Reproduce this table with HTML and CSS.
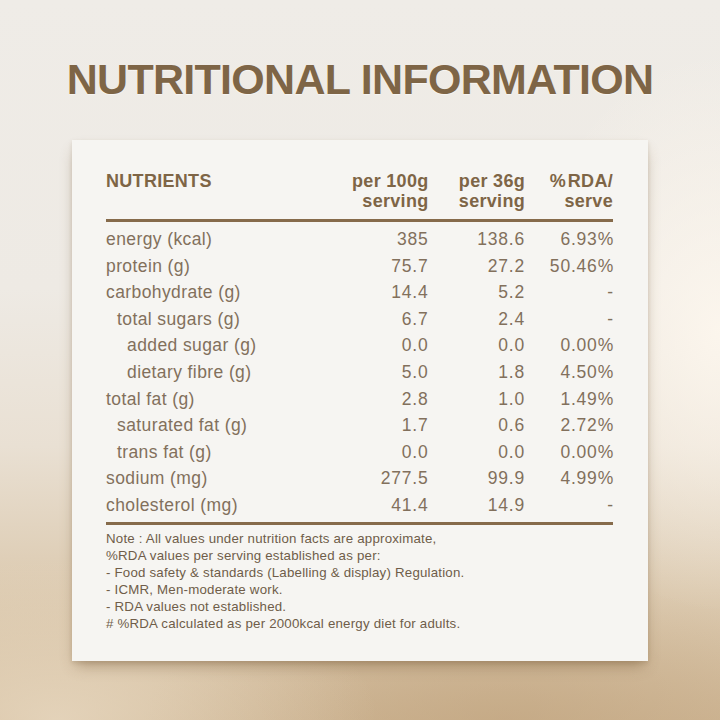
FILE: index.html
```html
<!DOCTYPE html>
<html lang="en">
<head>
<meta charset="utf-8">
<title>Nutritional Information</title>
<link rel="stylesheet" href="styles.css">
</head>
<body>
<main class="page">
  <h1 class="title">NUTRITIONAL INFORMATION</h1>
  <section class="card">
    <div class="table">
      <div class="head">
        <div class="h-label">NUTRIENTS</div>
        <div class="h-num">per 100g<br>serving</div>
        <div class="h-num">per 36g<br>serving</div>
        <div class="h-num">%&#8202;RDA/<br>serve</div>
      </div>
      <div class="rows">
        <div class="row"><span class="lbl">energy (kcal)</span><span class="num">385</span><span class="num">138.6</span><span class="num">6.93%</span></div>
        <div class="row"><span class="lbl">protein (g)</span><span class="num">75.7</span><span class="num">27.2</span><span class="num">50.46%</span></div>
        <div class="row"><span class="lbl">carbohydrate (g)</span><span class="num">14.4</span><span class="num">5.2</span><span class="num">-</span></div>
        <div class="row"><span class="lbl ind1">total sugars (g)</span><span class="num">6.7</span><span class="num">2.4</span><span class="num">-</span></div>
        <div class="row"><span class="lbl ind2">added sugar (g)</span><span class="num">0.0</span><span class="num">0.0</span><span class="num">0.00%</span></div>
        <div class="row"><span class="lbl ind2">dietary fibre (g)</span><span class="num">5.0</span><span class="num">1.8</span><span class="num">4.50%</span></div>
        <div class="row"><span class="lbl">total fat (g)</span><span class="num">2.8</span><span class="num">1.0</span><span class="num">1.49%</span></div>
        <div class="row"><span class="lbl ind1">saturated fat (g)</span><span class="num">1.7</span><span class="num">0.6</span><span class="num">2.72%</span></div>
        <div class="row"><span class="lbl ind1">trans fat (g)</span><span class="num">0.0</span><span class="num">0.0</span><span class="num">0.00%</span></div>
        <div class="row"><span class="lbl">sodium (mg)</span><span class="num">277.5</span><span class="num">99.9</span><span class="num">4.99%</span></div>
        <div class="row"><span class="lbl">cholesterol (mg)</span><span class="num">41.4</span><span class="num">14.9</span><span class="num">-</span></div>
      </div>
    </div>
    <div class="note">
      <p>Note : All values under nutrition facts are approximate,</p>
      <p>%RDA values per serving established as per:</p>
      <p>- Food safety &amp; standards (Labelling &amp; display) Regulation.</p>
      <p>- ICMR, Men-moderate work.</p>
      <p>- RDA values not established.</p>
      <p># %RDA calculated as per 2000kcal energy diet for adults.</p>
    </div>
  </section>
</main>
</body>
</html>
```

FILE: styles.css
```css
* { box-sizing: border-box; }

html, body {
  margin: 0;
  padding: 0;
}

body {
  width: 720px;
  height: 720px;
  overflow: hidden;
  font-family: "Liberation Sans", Arial, sans-serif;
  background:
    radial-gradient(ellipse 200px 280px at 100% 46%, rgba(253, 247, 238, 0.9), rgba(253, 247, 238, 0) 100%),
    radial-gradient(ellipse 320px 160px at 8% 100%, rgba(236, 222, 200, 0.7), rgba(236, 222, 200, 0) 100%),
    radial-gradient(ellipse 360px 140px at 70% 100%, rgba(190, 160, 122, 0.55), rgba(190, 160, 122, 0) 100%),
    linear-gradient(180deg, #efece7 0%, #eeeae4 40%, #e9e0d3 62%, #dccab0 82%, #cfb796 100%);
}

.page {
  display: flex;
  flex-direction: column;
  align-items: center;
  padding-top: 58px;
}

.title {
  margin: 0;
  font-family: "Liberation Sans", Arial, sans-serif;
  font-weight: 700;
  font-size: 43px;
  line-height: 43px;
  letter-spacing: -0.7px;
  color: #7e6546;
  text-shadow: 0 1px 1px rgba(255, 255, 255, 0.5);
}

.card {
  margin-top: 39px;
  width: 576px;
  height: 521px;
  background: #f6f5f2;
  padding: 31px 35px 0 34px;
  box-shadow:
    0 8px 14px -4px rgba(110, 80, 45, 0.45),
    0 2px 4px rgba(110, 80, 45, 0.15);
}

.head,
.row {
  display: grid;
  grid-template-columns: 1fr 100px 96.5px 88px;
}

.head {
  font-weight: 700;
  font-size: 18px;
  line-height: 20px;
  letter-spacing: 0.3px;
  color: #7e6546;
  padding-bottom: 8px;
  border-bottom: 3px solid #866b4b;
}

.h-num {
  text-align: right;
}

.rows {
  padding-top: 4px;
  padding-bottom: 3px;
  border-bottom: 3px solid #866b4b;
}

.row {
  font-family: "Liberation Sans", Arial, sans-serif;
  font-size: 17.5px;
  line-height: 26.6px;
  letter-spacing: 0.4px;
  color: #82705c;
  white-space: nowrap;
}

.num {
  text-align: right;
  letter-spacing: 0.8px;
}

.num:last-child {
  margin-right: -1px;
}

.ind1 { padding-left: 11px; }
.ind2 { padding-left: 21px; }

.note {
  margin-top: 5px;
  font-size: 13.3px;
  line-height: 17px;
  letter-spacing: 0.2px;
  color: #6f5d49;
}

.note p {
  margin: 0;
}
```
